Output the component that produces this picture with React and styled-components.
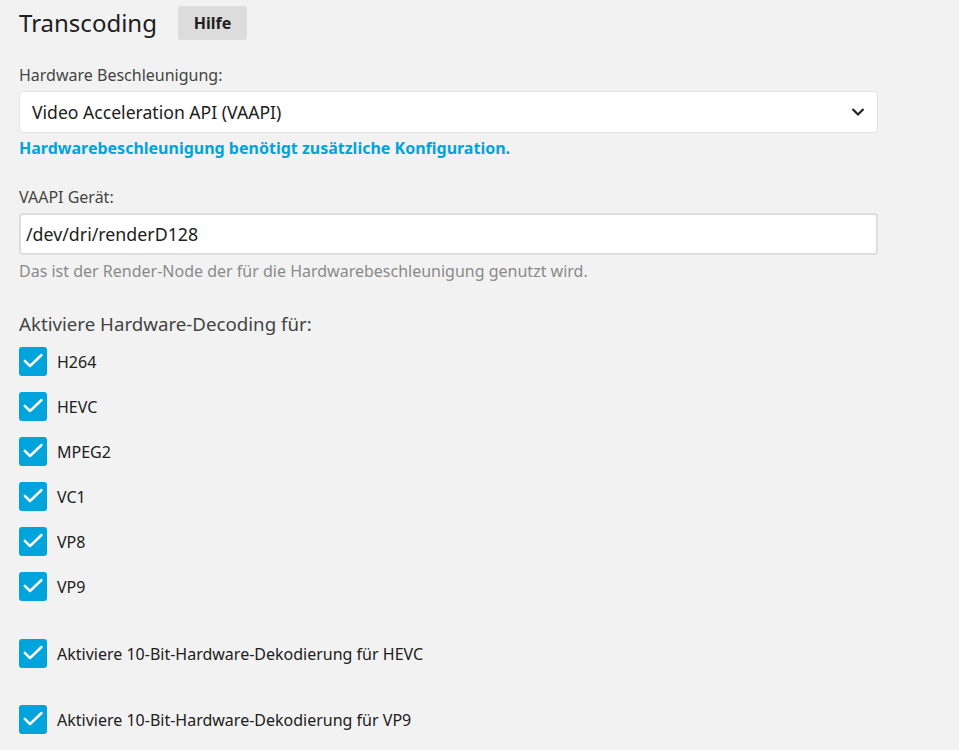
import React from "react";
import styled, { createGlobalStyle } from "styled-components";

const Global = createGlobalStyle`
  html, body { margin: 0; padding: 0; background: #f2f2f2; }
  body { font-family: "Noto Sans", sans-serif; color: #202020; }
`;

const Page = styled.div`
  padding: 6px 81px 0 19px;
  font-family: "Noto Sans", sans-serif;
`;

const Header = styled.div`
  display: flex;
  align-items: center;
  gap: 21px;
  height: 34px;
`;

const Title = styled.h1`
  margin: 0;
  font-size: 24px;
  font-weight: 400;
  color: #202020;
  line-height: 34px;
`;

const HelpButton = styled.button`
  width: 69px;
  height: 34px;
  border: none;
  border-radius: 3px;
  background: #dcdcdc;
  font-family: "Noto Sans", sans-serif;
  font-size: 16px;
  font-weight: 700;
  color: #202020;
  padding: 0;
`;

const Field = styled.div`
  margin-top: ${(p) => p.$top || 0}px;
`;

const Label = styled.div`
  font-size: 16px;
  color: #444;
  line-height: 22px;
  margin-bottom: 5px;
`;

const SelectBox = styled.div`
  position: relative;
  height: 42px;
  box-sizing: border-box;
  background: #fff;
  border: 1px solid #e2e2e2;
  border-radius: 4px;
  display: flex;
  align-items: center;
  padding: 0 12px;
  font-size: 17.6px;
  color: #202020;
`;

const Chevron = styled.svg`
  position: absolute;
  right: 12px;
  top: 50%;
  transform: translateY(-50%);
`;

const InputBox = styled.div`
  height: 42px;
  box-sizing: border-box;
  background: #fff;
  border: 2px solid #dddddd;
  border-radius: 4px;
  display: flex;
  align-items: center;
  padding: 0 5px;
  font-size: 17.8px;
  color: #202020;
`;

const Notice = styled.div`
  margin-top: 4px;
  font-size: 16px;
  font-weight: 700;
  color: #00a4dc;
  line-height: 22px;
`;

const Helper = styled.div`
  margin-top: 5px;
  font-size: 16px;
  color: #8a8a8a;
  line-height: 22px;
`;

const SectionTitle = styled.div`
  margin-top: 30px;
  font-size: 18.7px;
  color: #444;
  line-height: 24px;
`;

const CheckList = styled.div`
  display: flex;
  flex-direction: column;
  gap: ${(p) => p.$gap}px;
  margin-top: ${(p) => p.$top}px;
`;

const CheckRow = styled.label`
  display: flex;
  align-items: center;
  gap: 10px;
  font-size: 16px;
  color: #202020;
  height: 29px;
`;

const Box = styled.span`
  width: 28px;
  height: 29px;
  border-radius: 3px;
  background: #00a4dc;
  display: flex;
  flex-shrink: 0;
`;

const Check = () => (
  <Box>
    <svg width="28" height="29" viewBox="0 0 28 29" fill="none">
      <path d="M5.8 13.8L11 19l11.5-11" stroke="#fff" strokeWidth="2.5" strokeLinecap="round" strokeLinejoin="round" />
    </svg>
  </Box>
);

const codecs = ["H264", "HEVC", "MPEG2", "VC1", "VP8", "VP9"];

export default function App() {
  return (
    <>
      <Global />
      <Page>
        <Header>
          <Title>Transcoding</Title>
          <HelpButton>Hilfe</HelpButton>
        </Header>
        <Field $top={24}>
          <Label>Hardware Beschleunigung:</Label>
          <SelectBox>
            Video Acceleration API (VAAPI)
            <Chevron width="14" height="9" viewBox="0 0 14 9">
              <path d="M1.5 1.5l5.5 5.5 5.5-5.5" stroke="#222" strokeWidth="2.2" fill="none" />
            </Chevron>
          </SelectBox>
          <Notice>Hardwarebeschleunigung benötigt zusätzliche Konfiguration.</Notice>
        </Field>
        <Field $top={27}>
          <Label>VAAPI Gerät:</Label>
          <InputBox>/dev/dri/renderD128</InputBox>
          <Helper>Das ist der Render-Node der für die Hardwarebeschleunigung genutzt wird.</Helper>
        </Field>
        <SectionTitle>Aktiviere Hardware-Decoding für:</SectionTitle>
        <CheckList $gap={16} $top={11}>
          {codecs.map((c) => (
            <CheckRow key={c}>
              <Check />
              {c}
            </CheckRow>
          ))}
        </CheckList>
        <CheckList $gap={37} $top={38}>
          <CheckRow>
            <Check />
            Aktiviere 10-Bit-Hardware-Dekodierung für HEVC
          </CheckRow>
          <CheckRow>
            <Check />
            Aktiviere 10-Bit-Hardware-Dekodierung für VP9
          </CheckRow>
        </CheckList>
      </Page>
    </>
  );
}
